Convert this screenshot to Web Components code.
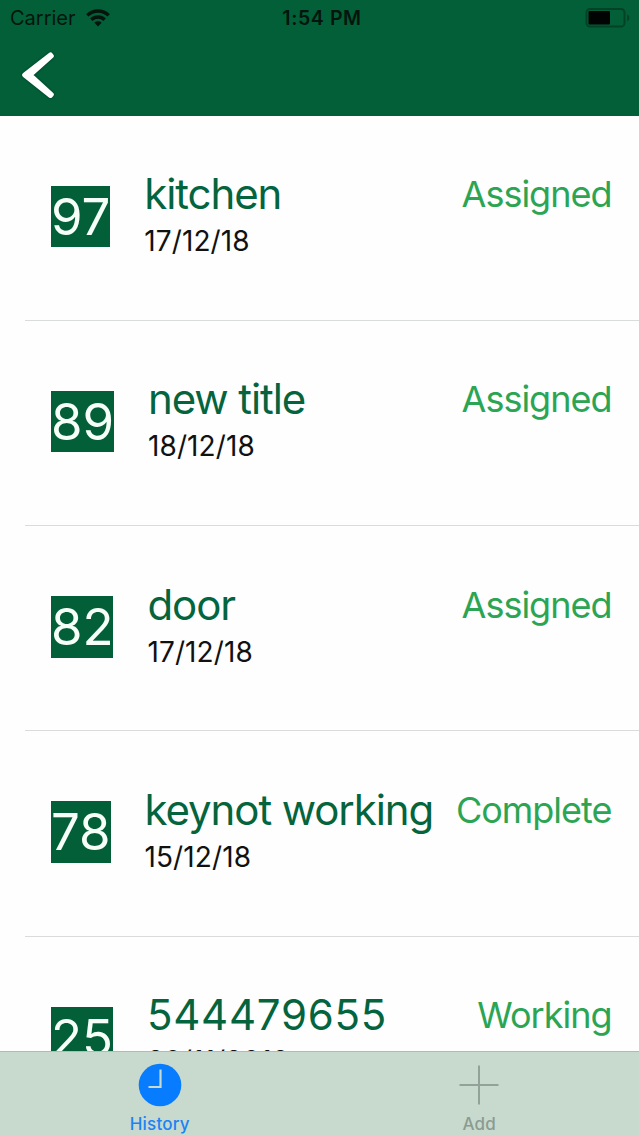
<!DOCTYPE html>
<html lang="en">
<head>
<meta charset="utf-8">
<title>History</title>
<style>
body {
  margin: 0;
  background: #fdfefd;
  font-family: Inter, "Liberation Sans", sans-serif;
}
.numeric {
  --title-spacing: 0.75px;
  --title-height: 45px;
  --date-height: 49px;
}
</style>
</head>
<body>
<phone-screen>
  <status-bar slot="header" carrier="Carrier" time="1:54 PM"></status-bar>
  <nav-bar slot="header"></nav-bar>
  <job-row number="97" status="Assigned">
    kitchen<span slot="date">17/12/18</span>
  </job-row>
  <job-row number="89" status="Assigned">
    new title<span slot="date">18/12/18</span>
  </job-row>
  <job-row number="82" status="Assigned">
    door<span slot="date">17/12/18</span>
  </job-row>
  <job-row number="78" status="Complete">
    keynot working<span slot="date">15/12/18</span>
  </job-row>
  <job-row class="numeric" number="25" status="Working">
    544479655<span slot="date">20/11/2018</span>
  </job-row>
  <tab-bar slot="footer">
    <tab-item active>
      <svg slot="icon" width="44" height="44" viewBox="0 0 44 44" fill="none">
        <circle cx="22" cy="22" r="21.3" fill="#087cff"/>
        <path d="M22.5 6.5v17.5H10.5" stroke="#c7dacd" stroke-width="2.2"/>
      </svg>
      History
    </tab-item>
    <tab-item>
      <svg slot="icon" width="44" height="44" viewBox="0 0 44 44" fill="none">
        <path d="M22 2.5v39M2.5 22h39" stroke="#93a298" stroke-width="2"/>
      </svg>
      Add
    </tab-item>
  </tab-bar>
</phone-screen>

<script>
class PhoneScreen extends HTMLElement {
  constructor() {
    super();
    this.attachShadow({ mode: "open" });
    this.shadowRoot.innerHTML = `
<style>
:host {
  display: flex;
  flex-direction: column;
  width: 639px;
  height: 1136px;
  overflow: hidden;
}
header {
  flex: none;
  height: 115.5px;
  background: #025f38;
}
main {
  flex: 1;
  min-height: 0;
  overflow: hidden;
}
</style>
<header><slot name="header"></slot></header>
<main><slot></slot></main>
<slot name="footer"></slot>
`;
  }
}

class StatusBar extends HTMLElement {
  constructor() {
    super();
    this.attachShadow({ mode: "open" });
    this.shadowRoot.innerHTML = `
<style>
:host {
  display: grid;
  grid-template-columns: 1fr auto 1fr;
  align-items: center;
  height: 35px;
  padding: 0 9px 0 10px;
  color: #03150c;
  font-size: 20px;
}
.left {
  display: flex;
  align-items: center;
  gap: 10px;
}
#time {
  font-weight: 600;
  font-size: 19.5px;
  letter-spacing: 0.6px;
  padding-left: 4px;
}
.battery {
  justify-self: end;
}
svg {
  display: block;
}
</style>
<div class="left">
  <span id="carrier"></span>
  <svg width="24" height="18" viewBox="0 0 24 18" fill="none" stroke="#03150c" stroke-width="3.4">
    <path d="M1.3 6.4a15.3 15.3 0 0 1 21.4 0"/>
    <path d="M5.4 10.7a9.4 9.4 0 0 1 13.2 0"/>
    <path d="M12 17.4l-3.6-3.7a5.2 5.2 0 0 1 7.2 0z" fill="#03150c" stroke="none"/>
  </svg>
</div>
<span id="time"></span>
<svg class="battery" width="45" height="20" viewBox="0 0 45 20">
  <rect x="1.5" y="1" width="38" height="17.5" rx="3.5" fill="none" stroke="#044226" stroke-width="2"/>
  <rect x="3.5" y="3" width="21.5" height="13.5" rx="1" fill="#010402"/>
  <path d="M42 6.5q2.5 1 2.5 3.3T42 13.2z" fill="#044226"/>
</svg>
`;
    this.shadowRoot.getElementById("carrier").textContent = this.getAttribute("carrier");
    this.shadowRoot.getElementById("time").textContent = this.getAttribute("time");
  }
}

class NavBar extends HTMLElement {
  constructor() {
    super();
    this.attachShadow({ mode: "open" });
    this.shadowRoot.innerHTML = `
<style>
:host {
  display: flex;
  align-items: center;
  height: 80px;
  padding-left: 20px;
}
svg {
  filter: drop-shadow(0 0 1px #0006);
}
</style>
<svg width="36" height="50" viewBox="0 0 36 50" fill="#fff" stroke="#fff" stroke-width="5" stroke-linecap="round" stroke-linejoin="round">
  <path d="M30.5 5L4.7 25l25.8 20.5 0.8-1L10 25 31.3 6z"/>
</svg>
`;
  }
}

class JobRow extends HTMLElement {
  constructor() {
    super();
    this.attachShadow({ mode: "open" });
    this.shadowRoot.innerHTML = `
<style>
:host {
  display: flex;
  align-items: flex-start;
  box-sizing: border-box;
  height: 205.3px;
  margin-left: 25px;
  padding: 55.5px 27.5px 0 26px;
  border-bottom: 1px solid #dadbdb;
}
#number {
  flex: none;
  margin: 14.5px 34px 0 0;
  background: #025f38;
  color: #f6fff8;
  font-size: 51px;
  line-height: 61.5px;
  letter-spacing: -0.1px;
}
.text {
  flex: 1;
  white-space: nowrap;
}
.title {
  color: #04643e;
  font-size: 42px;
  line-height: var(--title-height, 46px);
  letter-spacing: var(--title-spacing, -1.1px);
}
.date {
  color: #111;
  font-size: 28px;
  line-height: var(--date-height, 49px);
  letter-spacing: 0.1px;
}
#status {
  color: #2ba553;
  font-size: 36px;
  line-height: 47px;
  letter-spacing: -1px;
}
</style>
<span id="number"></span>
<div class="text">
  <div class="title"><slot></slot></div>
  <div class="date"><slot name="date"></slot></div>
</div>
<span id="status"></span>
`;
    this.shadowRoot.getElementById("number").textContent = this.getAttribute("number");
    this.shadowRoot.getElementById("status").textContent = this.getAttribute("status");
  }
}

class TabBar extends HTMLElement {
  constructor() {
    super();
    this.attachShadow({ mode: "open" });
    this.shadowRoot.innerHTML = `
<style>
:host {
  display: flex;
  flex: none;
  box-sizing: border-box;
  height: 85px;
  border-top: 1px solid #adbdb3;
  background: #c7dacd;
}
</style>
<slot></slot>
`;
  }
}

class TabItem extends HTMLElement {
  constructor() {
    super();
    this.attachShadow({ mode: "open" });
    this.shadowRoot.innerHTML = `
<style>
:host {
  display: flex;
  flex: 1;
  flex-direction: column;
  align-items: center;
  padding-top: 11px;
  color: #8b9b91;
  font-size: 17px;
  font-weight: 500;
  line-height: 22px;
  letter-spacing: 0.2px;
}
:host([active]) {
  color: #1c83f5;
}
.label {
  margin-top: 6px;
}
</style>
<slot name="icon"></slot>
<div class="label"><slot></slot></div>
`;
  }
}

customElements.define("phone-screen", PhoneScreen);
customElements.define("status-bar", StatusBar);
customElements.define("nav-bar", NavBar);
customElements.define("job-row", JobRow);
customElements.define("tab-bar", TabBar);
customElements.define("tab-item", TabItem);
</script>
</body>
</html>
